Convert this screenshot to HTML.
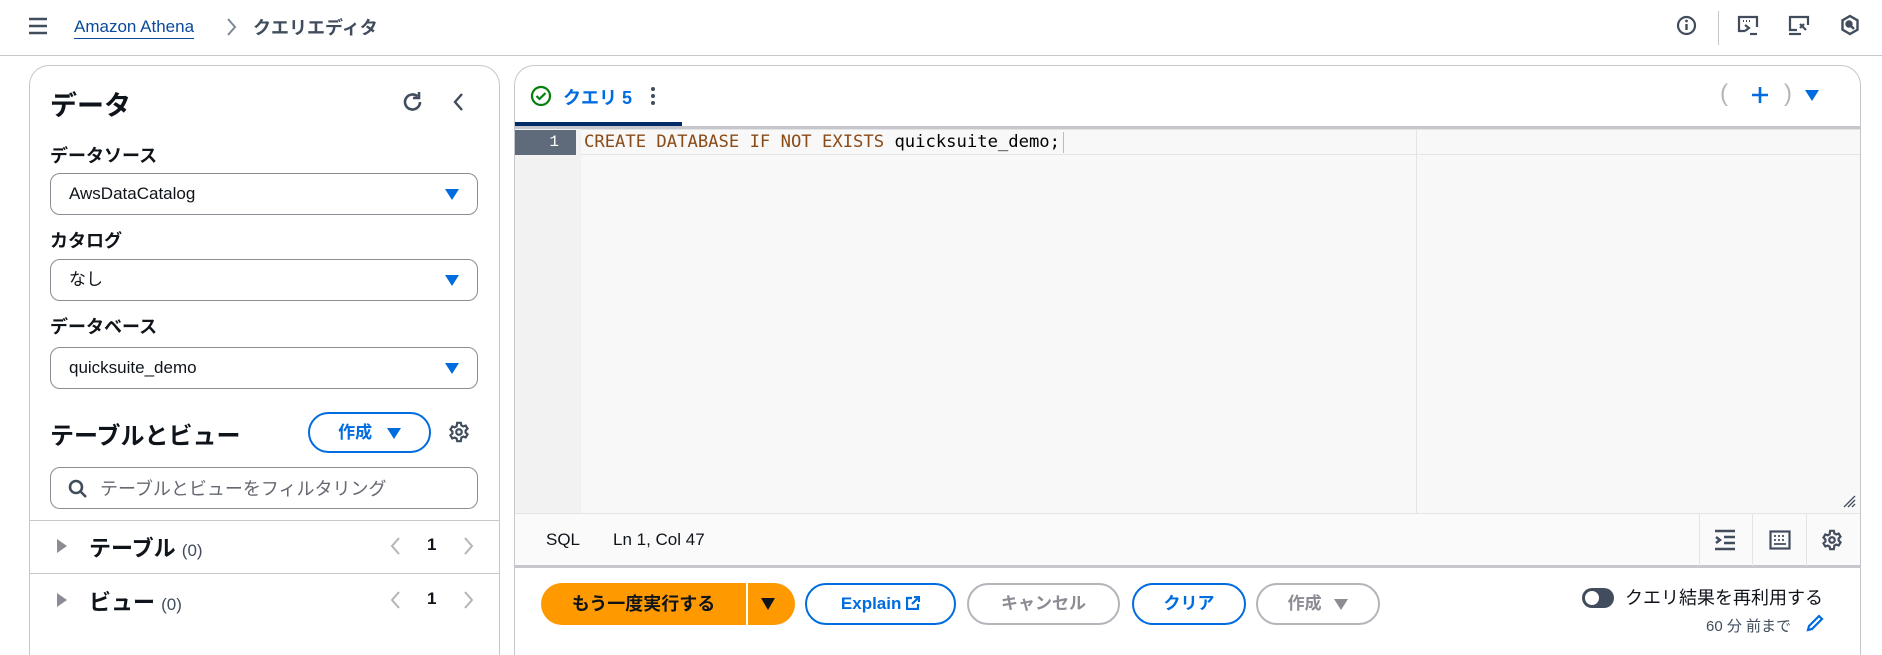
<!DOCTYPE html>
<html><head><meta charset="utf-8"><style>
*{box-sizing:border-box;margin:0;padding:0}
html,body{width:1882px;height:655px;overflow:hidden}
body{background:#fff;font-family:"Liberation Sans","Noto Sans CJK JP",sans-serif;color:#0f141a;position:relative}
.a{position:absolute}
.lbl{position:absolute;left:50px;font-size:18px;font-weight:700}
.sel{position:absolute;left:50px;width:428px;height:42px;border:1px solid #8c8c94;border-radius:10px;font-size:17px;padding-left:18px;line-height:40px}
.sel .c{position:absolute;right:18px;top:15px;width:0;height:0;border-left:7px solid transparent;border-right:7px solid transparent;border-top:11px solid #006ce0}
.btn{position:absolute;top:583px;height:42px;border-radius:21px;border:2px solid #006ce0;color:#006ce0;font-weight:700;font-size:17px;text-align:center;line-height:38px}
.gray{border-color:#b4b4bb;color:#8c8c94}
.ic{position:absolute}
</style></head><body>
<!-- header -->
<div class="a" style="left:0;top:0;width:1882px;height:56px;border-bottom:1px solid #c6c6cd"></div>
<svg class="ic" style="left:28px;top:17px" width="20" height="18"><path d="M1 2h18M1 9h18M1 16h18" stroke="#414d5c" stroke-width="2.5"/></svg>
<div class="a" style="left:74px;top:16px;font-size:17px;border-bottom:1px solid #0a4a9c;line-height:22px;color:#0a4a9c">Amazon Athena</div>
<svg class="ic" style="left:226px;top:18px" width="12" height="18"><path d="M2 1l7 8-7 8" stroke="#7d8998" stroke-width="2" fill="none"/></svg>
<div class="a" style="left:253px;top:14px;font-size:18px;color:#414d5c;font-weight:700">クエリエディタ</div>
<svg class="ic" style="left:1676px;top:15px" width="21" height="21"><circle cx="10.5" cy="10.5" r="8.5" stroke="#414d5c" stroke-width="2.2" fill="none"/><path d="M10.5 9v6" stroke="#414d5c" stroke-width="2.4"/><circle cx="10.5" cy="6" r="1.4" fill="#414d5c"/></svg>
<div class="a" style="left:1718px;top:11px;width:1px;height:34px;background:#c6c6cd"></div>
<svg class="ic" style="left:1737px;top:15px" width="22" height="22" fill="none" stroke="#414d5c" stroke-width="2.2"><path d="M8 16H2V2h18v10"/><path d="M6 6h1M9 6h1M12 6h1" stroke-width="2"/><path d="M8 10l4 3-4 3"/><path d="M13 19h7"/></svg>
<svg class="ic" style="left:1788px;top:15px" width="22" height="22" fill="none" stroke="#414d5c" stroke-width="2.2"><path d="M9 15H2V2h18v8"/><path d="M1 19h12"/><path d="M12 9l6 6M16 9l-4 4"/></svg>
<svg class="ic" style="left:1840px;top:14px" width="20" height="22" fill="none" stroke="#414d5c" stroke-width="2.4"><path d="M10 2l7.5 4.3v9.4L10 20l-7.5-4.3V6.3z"/><circle cx="9" cy="10" r="2.5" fill="#414d5c"/><path d="M10 11l4 4"/></svg>

<!-- left panel -->
<div class="a" style="left:29px;top:65px;width:471px;height:590px;border:1px solid #c6c6cd;border-bottom:none;border-radius:20px 20px 0 0"></div>
<div class="a" style="left:50px;top:84px;font-size:27px;font-weight:700">データ</div>
<svg class="ic" style="left:401px;top:90px" width="24" height="24" fill="none" stroke="#414d5c" stroke-width="2.6"><path d="M19 12a7.5 7.5 0 1 1-2.5-5.6"/><path d="M18 2v6h-6" fill="none"/></svg>
<svg class="ic" style="left:452px;top:93px" width="12" height="18"><path d="M10 1L3 9l7 8" stroke="#414d5c" stroke-width="2.4" fill="none"/></svg>
<div class="lbl" style="top:142px">データソース</div>
<div class="sel" style="top:173px">AwsDataCatalog<span class="c"></span></div>
<div class="lbl" style="top:227px">カタログ</div>
<div class="sel" style="top:259px">なし<span class="c"></span></div>
<div class="lbl" style="top:313px">データベース</div>
<div class="sel" style="top:347px">quicksuite_demo<span class="c"></span></div>
<div class="a" style="left:50px;top:416px;font-size:24px;font-weight:700">テーブルとビュー</div>
<div class="btn" style="left:308px;top:412px;width:123px;height:41px;font-size:17px">作成 <span style="display:inline-block;margin-left:10px;width:0;height:0;border-left:7px solid transparent;border-right:7px solid transparent;border-top:11px solid #006ce0;vertical-align:middle"></span></div>
<svg class="ic" style="left:448px;top:421px" width="22" height="22" viewBox="0 0 24 24" fill="none" stroke="#414d5c" stroke-width="2.4"><path d="M10 2h4l.6 2.8 2 1.1 2.7-.9 2 3.4-2.1 1.9v2.3l2.1 1.9-2 3.4-2.7-.9-2 1.1L14 22h-4l-.6-2.8-2-1.1-2.7.9-2-3.4 2.1-1.9v-2.3L2.7 9.4l2-3.4 2.7.9 2-1.1z"/><circle cx="12" cy="12" r="3"/></svg>
<div class="a" style="left:50px;top:467px;width:428px;height:42px;border:1px solid #8c8c94;border-radius:10px"></div>
<svg class="ic" style="left:68px;top:479px" width="20" height="20" fill="none" stroke="#414d5c" stroke-width="2.6"><circle cx="8" cy="8" r="6"/><path d="M12.5 12.5l5.5 5.5"/></svg>
<div class="a" style="left:100px;top:475px;font-size:18px;color:#656871">テーブルとビューをフィルタリング</div>
<div class="a" style="left:29px;top:520px;width:471px;height:1px;background:#c6c6cd"></div>
<div class="a" style="left:29px;top:573px;width:471px;height:1px;background:#c6c6cd"></div>
<svg class="ic" style="left:56px;top:538px" width="12" height="16"><path d="M1 1l10 7-10 7z" fill="#8c8c94"/></svg>
<div class="a" style="left:89px;top:531px;font-size:22px;font-weight:700">テーブル <span style="font-size:17px;font-weight:400;color:#414d5c">(0)</span></div>
<svg class="ic" style="left:389px;top:537px" width="12" height="18"><path d="M10 1L3 9l7 8" stroke="#b4b4bb" stroke-width="2" fill="none"/></svg>
<div class="a" style="left:427px;top:535px;font-size:17px;font-weight:700">1</div>
<svg class="ic" style="left:463px;top:537px" width="12" height="18"><path d="M2 1l7 8-7 8" stroke="#b4b4bb" stroke-width="2" fill="none"/></svg>
<svg class="ic" style="left:56px;top:592px" width="12" height="16"><path d="M1 1l10 7-10 7z" fill="#8c8c94"/></svg>
<div class="a" style="left:89px;top:585px;font-size:22px;font-weight:700">ビュー <span style="font-size:17px;font-weight:400;color:#414d5c">(0)</span></div>
<svg class="ic" style="left:389px;top:591px" width="12" height="18"><path d="M10 1L3 9l7 8" stroke="#b4b4bb" stroke-width="2" fill="none"/></svg>
<div class="a" style="left:427px;top:589px;font-size:17px;font-weight:700">1</div>
<svg class="ic" style="left:463px;top:591px" width="12" height="18"><path d="M2 1l7 8-7 8" stroke="#b4b4bb" stroke-width="2" fill="none"/></svg>

<!-- right panel -->
<div class="a" style="left:514px;top:65px;width:1347px;height:590px;border:1px solid #c6c6cd;border-bottom:none;border-radius:20px 20px 0 0"></div>
<svg class="ic" style="left:530px;top:85px" width="22" height="22" fill="none" stroke="#037f0c" stroke-width="2.2"><circle cx="11" cy="11" r="9"/><path d="M6.5 11l3 3 6-6"/></svg>
<div class="a" style="left:563px;top:84px;font-size:18px;font-weight:700;color:#006ce0">クエリ 5</div>
<svg class="ic" style="left:649px;top:86px" width="8" height="22"><circle cx="4" cy="3" r="2" fill="#414d5c"/><circle cx="4" cy="10" r="2" fill="#414d5c"/><circle cx="4" cy="17" r="2" fill="#414d5c"/></svg>
<div class="a" style="left:515px;top:122px;width:167px;height:4px;background:#002b66"></div>
<div class="a" style="left:515px;top:126px;width:1345px;height:3px;background:#c6c6cd"></div>
<div class="a" style="left:1720px;top:80px;font-size:24px;color:#b4b4bb;font-weight:300">(</div>
<svg class="ic" style="left:1751px;top:86px" width="18" height="18"><path d="M9 1v16M1 9h16" stroke="#006ce0" stroke-width="2.6"/></svg>
<div class="a" style="left:1784px;top:80px;font-size:24px;color:#b4b4bb;font-weight:300">)</div>
<svg class="ic" style="left:1805px;top:90px" width="14" height="11"><path d="M0 0h14L7 11z" fill="#006ce0"/></svg>
<!-- editor -->
<div class="a" style="left:515px;top:129px;width:1345px;height:385px;background:#f8f8f8"></div>
<div class="a" style="left:515px;top:129px;width:66px;height:385px;background:#f2f2f2"></div>
<div class="a" style="left:581px;top:129px;width:1279px;height:26px;border-bottom:1px solid #e4e4e4;border-top:1px solid #e4e4e4"></div>
<div class="a" style="left:515px;top:130px;width:61px;height:25px;background:#5f6b7a;color:#fff;font-family:'Liberation Mono',monospace;font-size:16px;text-align:right;padding-right:17px;line-height:25px">1</div>
<div class="a" style="left:1416px;top:129px;width:1px;height:385px;background:#e4e4e4"></div>
<div class="a" style="left:584px;top:130px;font-family:'DejaVu Sans Mono','Liberation Mono',monospace;font-size:17.2px;line-height:25px;color:#8a4b17">CREATE DATABASE IF NOT EXISTS <span style="color:#000">quicksuite_demo;</span></div>
<div class="a" style="left:1063px;top:132px;width:1px;height:21px;background:#bbb"></div>
<svg class="ic" style="left:1842px;top:494px" width="14" height="14" stroke="#414d5c" stroke-width="1.3"><path d="M2 13L13 2M6 13l7-7M10 13l3-3"/></svg>
<!-- status bar -->
<div class="a" style="left:515px;top:513px;width:1345px;height:1px;background:#e4e4e4"></div>
<div class="a" style="left:515px;top:514px;width:1345px;height:52px;background:#fafafa"></div>
<div class="a" style="left:515px;top:565px;width:1345px;height:3px;background:#c6c6cd"></div>
<div class="a" style="left:546px;top:530px;font-size:17px">SQL</div>
<div class="a" style="left:613px;top:530px;font-size:17px">Ln 1, Col 47</div>
<div class="a" style="left:1699px;top:514px;width:1px;height:52px;background:#e4e4e4"></div>
<div class="a" style="left:1752px;top:514px;width:1px;height:52px;background:#e4e4e4"></div>
<div class="a" style="left:1806px;top:514px;width:1px;height:52px;background:#e4e4e4"></div>
<svg class="ic" style="left:1714px;top:529px" width="22" height="22" fill="none" stroke="#414d5c" stroke-width="2.4"><path d="M1 2h20M1 20h20M10 8h11M10 14h11"/><path d="M2 8l4 3-4 3"/></svg>
<svg class="ic" style="left:1769px;top:530px" width="22" height="20" fill="none" stroke="#414d5c" stroke-width="2.2"><rect x="1.5" y="1.5" width="19" height="17"/><path d="M5 6h2M9 6h2M13 6h2M5 10h2M9 10h2M13 10h2M5 14h12" stroke-width="1.8"/></svg>
<svg class="ic" style="left:1821px;top:529px" width="22" height="22" viewBox="0 0 24 24" fill="none" stroke="#414d5c" stroke-width="2.4"><path d="M10 2h4l.6 2.8 2 1.1 2.7-.9 2 3.4-2.1 1.9v2.3l2.1 1.9-2 3.4-2.7-.9-2 1.1L14 22h-4l-.6-2.8-2-1.1-2.7.9-2-3.4 2.1-1.9v-2.3L2.7 9.4l2-3.4 2.7.9 2-1.1z"/><circle cx="12" cy="12" r="3"/></svg>
<!-- buttons -->
<div class="a" style="left:541px;top:583px;width:205px;height:42px;background:#ff9900;border-radius:21px 0 0 21px;font-size:18px;font-weight:700;text-align:center;line-height:42px">もう一度実行する</div>
<div class="a" style="left:748px;top:583px;width:47px;height:42px;background:#ff9900;border-radius:0 21px 21px 0"></div>
<svg class="ic" style="left:761px;top:598px" width="14" height="12"><path d="M0 0h14L7 12z" fill="#0f141a"/></svg>
<div class="btn" style="left:805px;width:151px">Explain <svg width="14" height="14" style="vertical-align:-1px" fill="none" stroke="#006ce0" stroke-width="2.2"><path d="M6 2H1v11h11V8"/><path d="M8 1h5v5M13 1L6 8"/></svg></div>
<div class="btn gray" style="left:967px;width:153px">キャンセル</div>
<div class="btn" style="left:1132px;width:114px">クリア</div>
<div class="btn gray" style="left:1256px;width:124px">作成 <span style="display:inline-block;margin-left:8px;width:0;height:0;border-left:7px solid transparent;border-right:7px solid transparent;border-top:11px solid #8c8c94;vertical-align:middle"></span></div>
<div class="a" style="left:1582px;top:588px;width:32px;height:20px;border-radius:10px;background:#414d5c"></div>
<div class="a" style="left:1585px;top:591px;width:14px;height:14px;border-radius:7px;background:#fff"></div>
<div class="a" style="left:1625px;top:584px;font-size:18px">クエリ結果を再利用する</div>
<div class="a" style="left:1706px;top:615px;font-size:15px;color:#414d5c">60 分 前まで</div>
<svg class="ic" style="left:1806px;top:614px" width="18" height="18" fill="none" stroke="#006ce0" stroke-width="2.2"><path d="M2 16l1-4L13 2l3 3L6 15z"/></svg>
</body></html>
